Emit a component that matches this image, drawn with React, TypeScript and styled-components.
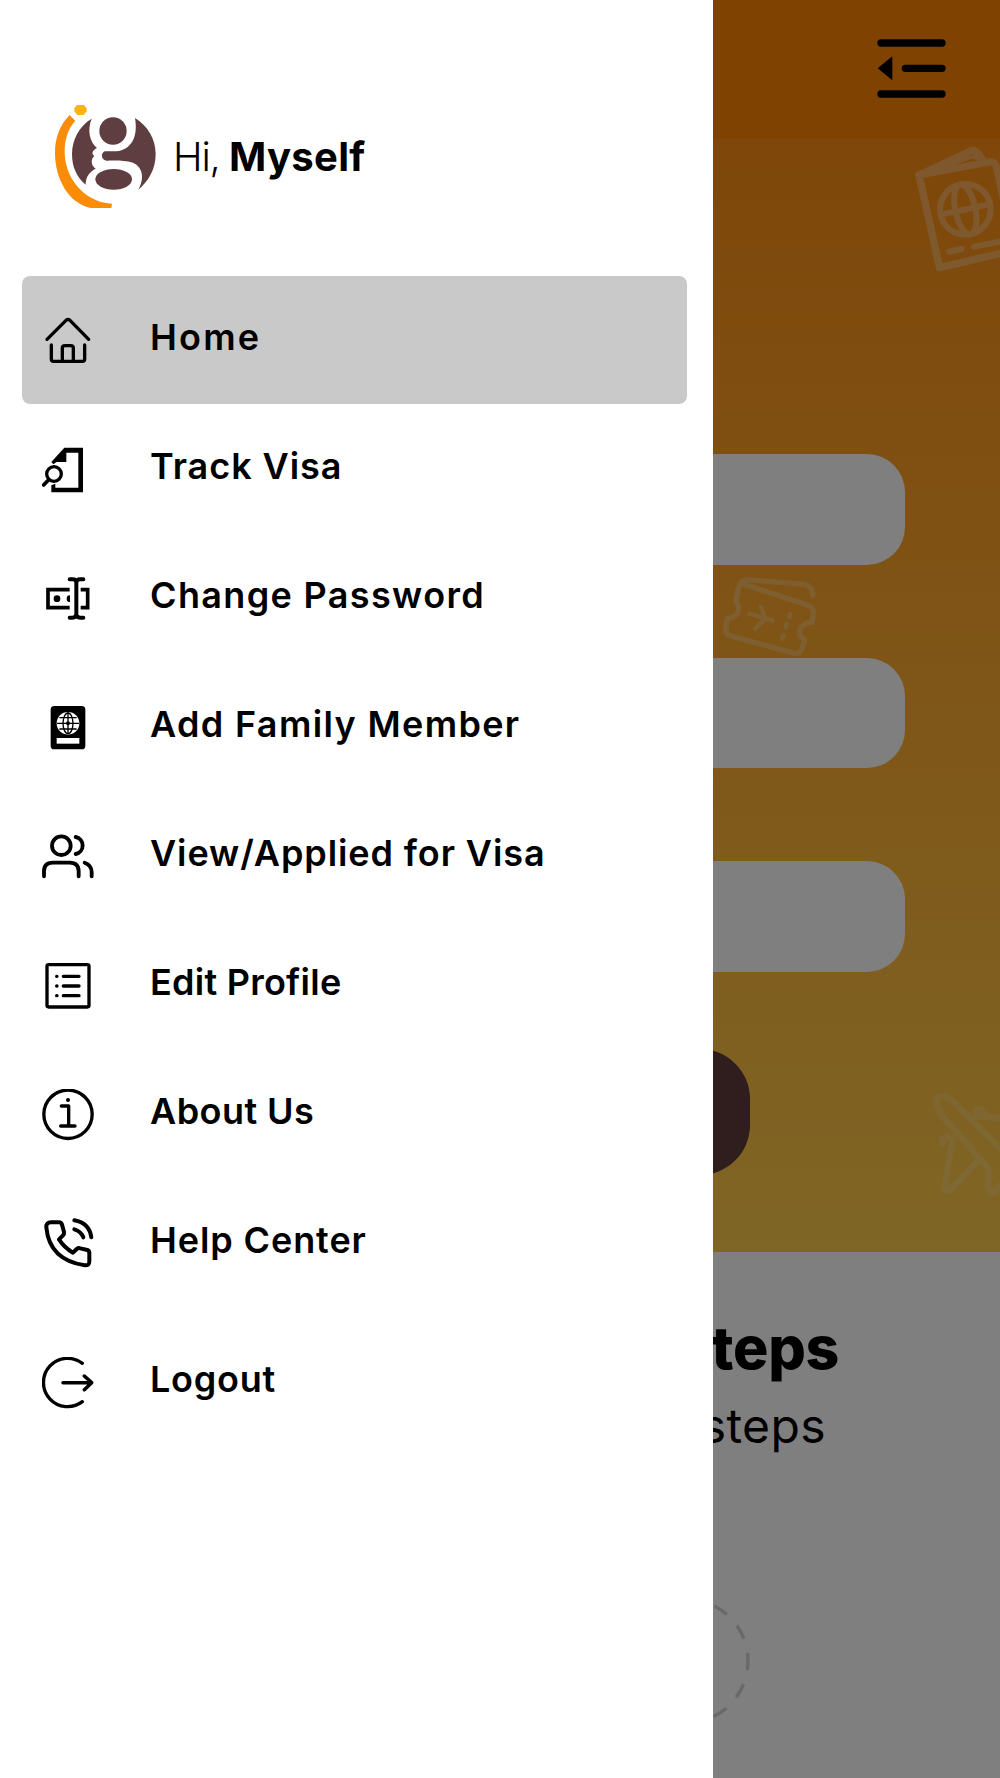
import React from "react";
import styled, { createGlobalStyle } from "styled-components";

const GlobalStyle = createGlobalStyle`
  *, *::before, *::after { box-sizing: border-box; }
  body {
    margin: 0;
    background: #fff;
    color: #000;
    font-family: Inter, "Open Sans", sans-serif;
  }
`;

const Screen = styled.div`
  position: relative;
  width: 1000px;
  height: 1778px;
  overflow: hidden;
`;

/* ---------- page under the drawer ---------- */

const Page = styled.div`
  display: flex;
  flex-direction: column;
  height: 100%;
  background: #fff;
`;

const TopBar = styled.header`
  display: flex;
  justify-content: flex-end;
  align-items: center;
  height: 139px;
  padding: 0 54px 3px 0;
  background: #ff8400;
`;

const Hero = styled.section`
  position: relative;
  display: flex;
  flex-direction: column;
  align-items: center;
  height: 1113px;
  padding-top: 315px;
  background: linear-gradient(#ff8e14, #fecc4c);
`;

const Fields = styled.div`
  position: relative;
  display: flex;
  flex-direction: column;
  gap: 93px;
  width: 810px;
`;

const Field = styled.div`
  height: 110.5px;
  border-radius: 38px;
  background: #fff;
`;

const Submit = styled.div`
  width: 500px;
  height: 126px;
  margin-top: 77.5px;
  border-radius: 50px;
  background: #603c3e;
`;

const Decoration = styled.svg<{ $x: number; $y: number; $alpha: number }>`
  position: absolute;
  left: ${(p) => p.$x}px;
  top: ${(p) => p.$y}px;
  opacity: ${(p) => p.$alpha};
  fill: none;
  stroke: #fff;
  stroke-linecap: round;
  stroke-linejoin: round;
`;

const Steps = styled.section`
  display: flex;
  flex-direction: column;
  align-items: flex-end;
  padding-top: 60px;
`;

const StepsTitle = styled.h2`
  margin: 0;
  padding-right: 161px;
  font-size: 59px;
  line-height: 72px;
  font-weight: 800;
  letter-spacing: -0.3px;
`;

const StepsText = styled.p`
  margin: 2px 0 0;
  padding-right: 174px;
  font-size: 48px;
  line-height: 80px;
  font-weight: 400;
  letter-spacing: 0.4px;
`;

const StepRing = styled.svg`
  margin: 131px 250px 0 0;
  fill: none;
  stroke: #d2d2d2;
`;

const Scrim = styled.div`
  position: absolute;
  inset: 0;
  background: rgba(0, 0, 0, 0.5);
`;

/* ---------- drawer ---------- */

const Drawer = styled.aside`
  position: absolute;
  inset: 0 auto 0 0;
  display: flex;
  flex-direction: column;
  width: 713px;
  padding: 103px 26px 0 22px;
  background: #fff;
`;

const Profile = styled.div`
  display: flex;
  align-items: center;
  height: 105px;
  padding-left: 31px;
`;

const Greeting = styled.div`
  display: flex;
  align-items: baseline;
  margin: 2px 0 0 16px;
  font-size: 40px;
  line-height: 48px;
`;

const Hi = styled.span`
  width: 56px;
  font-weight: 350;
  letter-spacing: -1.2px;
`;

const Name = styled.strong`
  font-weight: 750;
  letter-spacing: 0.3px;
`;

const Menu = styled.nav`
  display: flex;
  flex-direction: column;
  gap: 1px;
  margin-top: 68px;
`;

const Item = styled.a<{ $active?: boolean; $last?: boolean }>`
  display: flex;
  align-items: center;
  height: 128px;
  margin-top: ${(p) => (p.$last ? 10 : 0)}px;
  padding: 2px 0 0 20px;
  border-radius: 8px;
  background: ${(p) => (p.$active ? "#c9c9c9" : "transparent")};
`;

const Icon = styled.svg`
  flex: none;
  width: 52px;
  height: 52px;
  fill: none;
  stroke: #000;
  stroke-width: 10;
  stroke-linecap: round;
  stroke-linejoin: round;
`;

const Label = styled.span<{ $track: number }>`
  margin-left: 56px;
  padding-bottom: 9px;
  font-size: 36px;
  line-height: 42px;
  font-weight: 600;
  white-space: nowrap;
  letter-spacing: ${(p) => p.$track}px;
`;

type MenuItem = { label: string; box: string; track: number; icon: React.ReactNode };

const items: MenuItem[] = [
  {
    label: "Home",
    box: "126 165 156 156",
    track: 2.2,
    icon: (
      <>
        <path d="M141 238 L198 181 Q204 176 210 181 L266 238" />
        <path d="M154 255V298Q154 304 161 304H247Q254 304 254 298V255" />
        <path d="M187 302V264Q187 257 195 257H212Q220 257 220 264V302" />
      </>
    ),
  },
  {
    label: "Track Visa",
    box: "126 552 156 156",
    track: 0.95,
    icon: (
      <>
        <path
          d="M154 606 L193 563H249V697H154V676L166 671V683H235V578H199V606H170L160 613Z"
          fill="#000"
          stroke="none"
        />
        <circle cx="162" cy="642" r="22" strokeWidth="10" />
        <path d="M146 659L131 675" strokeWidth="11" />
      </>
    ),
  },
  {
    label: "Change Password",
    box: "126 69 156 156",
    track: 1.35,
    icon: (
      <>
        <path d="M209 119H144V173H209M242 119H263V173H242" strokeWidth="11" strokeLinecap="butt" strokeLinejoin="miter" />
        <path d="M209 88H217Q229 88 229 98Q229 88 241 88H250M229 96V194M209 203H217Q229 203 229 193Q229 203 241 203H250" strokeWidth="12" />
        <circle cx="171" cy="146" r="10" fill="#000" stroke="none" />
        <path d="M210 136V156A10 10 0 0 1 210 136Z" fill="#000" stroke="none" />
      </>
    ),
  },
  {
    label: "Add Family Member",
    box: "126 456 156 156",
    track: 1.35,
    icon: (
      <>
        <rect x="152" y="468" width="104" height="130" rx="11" fill="#000" stroke="none" />
        <circle cx="204" cy="520" r="34" fill="#fff" stroke="none" />
        <g strokeWidth="4" strokeLinecap="butt">
          <ellipse cx="204" cy="520" rx="15" ry="31" />
          <path d="M204 487V553M171 520H237M178 503H230M178 537H230" />
        </g>
        <circle cx="204" cy="520" r="6" fill="#000" stroke="none" />
        <rect x="170" y="564" width="68" height="17" fill="#fff" stroke="none" />
      </>
    ),
  },
  {
    label: "View/Applied for Visa",
    box: "126 843 156 156",
    track: 0.9,
    icon: (
      <g strokeWidth="11.5">
        <circle cx="184" cy="887" r="28" />
        <path d="M132 979V964Q132 938 158 938H209Q236 938 236 964V979" />
        <path d="M227 861A26 26 0 0 1 227 912M254 938Q275 946 275 966V979" />
      </g>
    ),
  },
  {
    label: "Edit Profile",
    box: "126 90 156 156",
    track: 0.25,
    icon: (
      <>
        <rect x="141" y="104" width="126" height="127" rx="5" />
        <path d="M190 139H237M190 168H237M190 197H237" />
        <path d="M170 139h1M170 168h1M170 197h1" />
      </>
    ),
  },
  {
    label: "About Us",
    box: "126 477 156 156",
    track: 0.45,
    icon: (
      <>
        <circle cx="204" cy="553" r="72.5" />
        <path d="M184 528H206V588M182 588H225" />
        <circle cx="204" cy="510" r="6" fill="#000" stroke="none" />
      </>
    ),
  },
  {
    label: "Help Center",
    box: "126 864 156 156",
    track: 0.9,
    icon: (
      <g strokeWidth="12">
        <path d="M153 877H177Q184 877 186 884L192 906Q193 912 189 916L177 928Q193 953 219 968L230 957Q235 953 241 955L262 960Q268 962 268 969V994Q268 1007 255 1006Q148 990 139 892Q138 877 153 877Z" />
        <path d="M223 871Q268 879 274 922" />
        <path d="M223 898Q243 904 250 922" />
      </g>
    ),
  },
  {
    label: "Logout",
    box: "126 1281 156 156",
    track: 0.75,
    icon: (
      <>
        <path d="M247 1300A72.5 72.5 0 1 0 247 1415" />
        <path d="M189 1358H272M253 1338L275 1358L253 1379" strokeWidth="10.5" />
      </>
    ),
  },
];

const BrandLogo = () => (
  <svg width="104" height="105" viewBox="40 39 312 315">
    <path
      d="M90 75C60 105 46 145 46 188C46 270 90 345 160 355L215 355L217 341C150 340 78 280 75 190C74 150 85 115 107 93Z"
      fill="#fb8c08"
    />
    <path d="M112 45H133L141 54V64L132 75H113L104 64V54Z" fill="#fbb414" />
    <g fill="#5f3e42">
      <path d="M156 86C118 108 97 150 97 192C97 232 112 262 138 284C138 262 148 246 168 236C153 226 153 206 164 198C153 190 160 180 172 174C150 155 142 120 156 86Z" />
      <path d="M286 84C325 108 348 148 348 192C348 240 325 275 295 300C314 270 312 232 280 218C250 209 215 212 200 212C185 210 182 190 195 184L230 184C275 180 296 140 286 84Z" />
      <circle cx="220" cy="123" r="41" />
      <ellipse cx="222" cy="268" rx="55" ry="31" />
    </g>
  </svg>
);

const CollapseIcon = () => (
  <svg width="69" height="61" viewBox="531 113 207 183" fill="none" stroke="#000" strokeWidth="22" strokeLinecap="round">
    <path d="M543 128H726M616 204H726M543 281H726" />
    <path d="M533 204L577 168V240Z" fill="#000" stroke="none" />
  </svg>
);

const Passport = () => (
  <Decoration $x={910} $y={1} $alpha={0.29} width="90" height="135" viewBox="630 420 270 405" strokeWidth="22">
    <path d="M657 525L868 486Q885 484 889 500L945 750L719 803Z" />
    <path d="M657 525L810 454Q826 448 836 462L853 486" />
    <path d="M700 512L812 472Q825 468 836 480" strokeWidth="10" />
    <g transform="rotate(-12 796 628)" strokeWidth="18">
      <circle cx="796" cy="628" r="76" />
      <ellipse cx="796" cy="628" rx="30" ry="76" />
      <path d="M720 628H872" />
    </g>
    <path d="M748 755L785 747M822 740L905 724" strokeWidth="18" />
  </Decoration>
);

const Tickets = () => (
  <Decoration $x={720} $y={431} $alpha={0.24} width="100" height="90" viewBox="90 390 300 270" strokeWidth="16">
    <path d="M152 430L350 494Q374 503 370 522L366 548Q337 548 330 570Q326 588 344 600L337 624Q330 645 310 639L122 588Q104 582 108 562L112 536Q139 532 145 514Q150 500 137 483L145 445Q150 420 170 419L342 433Q368 438 368 465" />
    <path d="M178 521L248 542M212 500L226 535L196 566" strokeWidth="13" />
    <path d="M300 523L298 532M290 552L287 561M280 587L277 595" strokeWidth="14" />
  </Decoration>
);

const Plane = () => (
  <Decoration $x={930} $y={951} $alpha={0.16} width="70" height="114" viewBox="720 720 210 342" strokeWidth="19">
    <path d="M940 905L790 755Q760 730 743 742Q734 760 757 798L895 956V1010Q898 1030 914 1027L945 990" />
    <path d="M788 862L764 1010Q766 1030 783 1018L858 938M845 806L870 800L945 805M757 880V868L770 858M858 790V780L872 777L884 790" />
  </Decoration>
);

export default function App() {
  return (
    <Screen>
      <GlobalStyle />
      <Page>
        <TopBar>
          <CollapseIcon />
        </TopBar>
        <Hero>
          <Passport />
          <Tickets />
          <Plane />
          <Fields>
            <Field />
            <Field />
            <Field />
          </Fields>
          <Submit />
        </Hero>
        <Steps>
          <StepsTitle>teps</StepsTitle>
          <StepsText>steps</StepsText>
          <StepRing width="128" height="128" viewBox="-64 -64 128 128">
            <circle r="62" strokeWidth="3.4" strokeDasharray="15 14.76" strokeDashoffset="6" />
          </StepRing>
        </Steps>
      </Page>
      <Scrim />
      <Drawer>
        <Profile>
          <BrandLogo />
          <Greeting>
            <Hi>Hi,</Hi>
            <Name>Myself</Name>
          </Greeting>
        </Profile>
        <Menu>
          {items.map((item, i) => (
            <Item key={item.label} $active={i === 0} $last={i === items.length - 1}>
              <Icon viewBox={item.box}>{item.icon}</Icon>
              <Label $track={item.track}>{item.label}</Label>
            </Item>
          ))}
        </Menu>
      </Drawer>
    </Screen>
  );
}
